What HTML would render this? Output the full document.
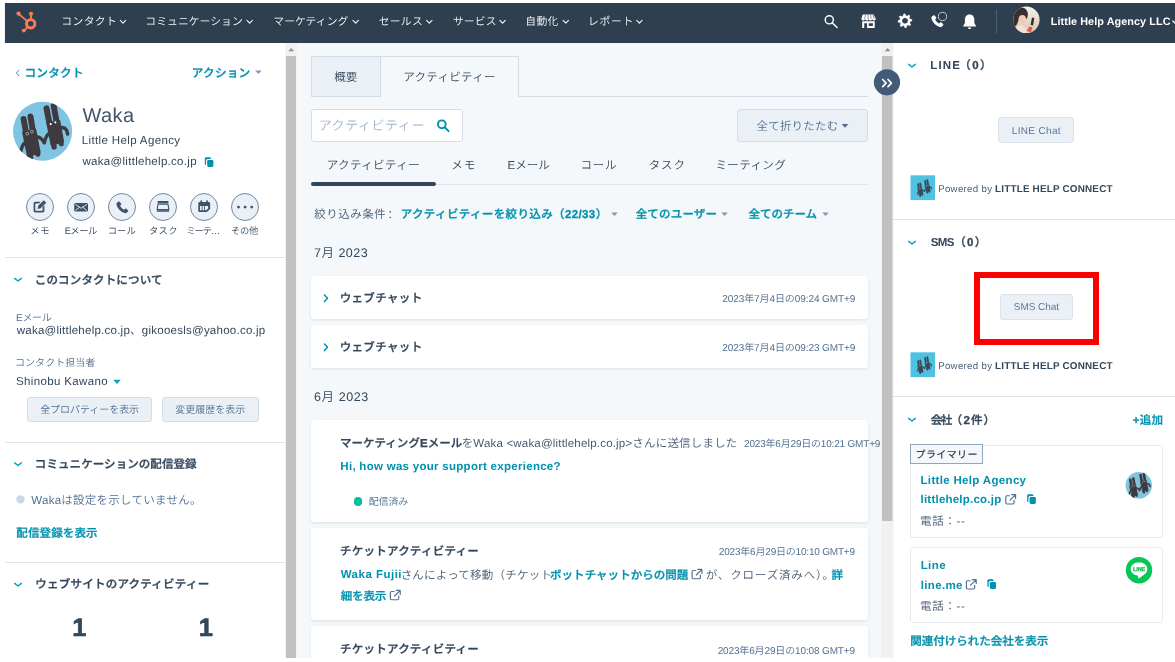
<!DOCTYPE html>
<html lang="ja">
<head>
<meta charset="utf-8">
<title>Waka | HubSpot</title>
<style>
*{box-sizing:border-box}
html,body{margin:0;padding:0}
body{width:1175px;height:662px;background:#fff;overflow:hidden;position:relative;font-family:"Liberation Sans","Noto Sans CJK JP",sans-serif;color:#33475b;font-weight:350;-webkit-font-smoothing:antialiased;font-kerning:normal;text-rendering:geometricPrecision}
.t{position:absolute;white-space:pre;margin:0;padding:0;z-index:4}
.b{position:absolute}
svg{position:absolute;overflow:visible}
.t b{font-weight:700}
nav,aside,main{position:absolute;left:0;top:0;width:1175px;height:662px;will-change:transform;pointer-events:none}
.t{z-index:auto}
</style>
</head>
<body>
<div class="b" style="left:5px;top:3px;width:1170px;height:40px;background:#2e3f50;box-shadow:0 1px 1px rgba(45,62,80,.35)"></div>
<div class="b" style="left:5px;top:43px;width:280px;height:615px;background:#fff"></div>
<div class="b" style="left:297px;top:43px;width:584px;height:615px;background:#f5f8fa"></div>
<div class="b" style="left:893px;top:43px;width:282px;height:615px;background:#fff"></div>
<div class="b" style="left:285px;top:43px;width:12px;height:615px;background:#f1f1f1"></div>
<div class="b" style="left:297px;top:43px;width:1px;height:615px;background:#f3f5f7"></div>
<div class="b" style="left:286px;top:56px;width:10px;height:602px;background:#c1c1c1"></div>
<div class="b" style="left:881px;top:43px;width:12px;height:615px;background:#f1f1f1"></div>
<div class="b" style="left:893px;top:43px;width:1px;height:615px;background:#f8f8f8"></div>
<div class="b" style="left:882px;top:56px;width:10px;height:465px;background:#c1c1c1"></div>
<div class="b" style="left:892px;top:56px;width:1px;height:465px;background:#dcdcdc"></div>
<div class="b" style="left:5px;top:256.5px;width:280px;height:1px;background:#dfe3eb"></div>
<div class="b" style="left:5px;top:441.7px;width:280px;height:1px;background:#dfe3eb"></div>
<div class="b" style="left:5px;top:562.2px;width:280px;height:1px;background:#dfe3eb"></div>
<div class="b" style="left:27px;top:396.5px;width:125px;height:25.5px;background:#eaf0f6;border:1px solid #d4dde7;border-radius:3px"></div>
<div class="b" style="left:162px;top:396.5px;width:97px;height:25.5px;background:#eaf0f6;border:1px solid #d4dde7;border-radius:3px"></div>
<div class="b" style="left:26px;top:193px;width:28px;height:28px;background:#eaf0f6;border:1px solid #6f88a4;border-radius:50%"></div>
<div class="b" style="left:67px;top:193px;width:28px;height:28px;background:#eaf0f6;border:1px solid #6f88a4;border-radius:50%"></div>
<div class="b" style="left:108px;top:193px;width:28px;height:28px;background:#eaf0f6;border:1px solid #6f88a4;border-radius:50%"></div>
<div class="b" style="left:149px;top:193px;width:28px;height:28px;background:#eaf0f6;border:1px solid #6f88a4;border-radius:50%"></div>
<div class="b" style="left:190px;top:193px;width:28px;height:28px;background:#eaf0f6;border:1px solid #6f88a4;border-radius:50%"></div>
<div class="b" style="left:231px;top:193px;width:28px;height:28px;background:#eaf0f6;border:1px solid #6f88a4;border-radius:50%"></div>
<div class="b" style="left:311px;top:56px;width:70px;height:40.5px;background:#eaf0f6;border:1px solid #d3deea"></div>
<div class="b" style="left:380px;top:56px;width:138.5px;height:41px;background:#f5f8fa;border:1px solid #d4dde7;border-bottom:none"></div>
<div class="b" style="left:518px;top:95.5px;width:350px;height:1px;background:#d4dde7"></div>
<div class="b" style="left:311px;top:109px;width:151.5px;height:33px;background:#fff;border:1px solid #d4dde7;border-radius:3px"></div>
<div class="b" style="left:737px;top:109px;width:131px;height:33px;background:#eaf0f6;border:1px solid #d4dde7;border-radius:3px"></div>
<div class="b" style="left:311px;top:184px;width:557px;height:1px;background:#dfe3eb"></div>
<div class="b" style="left:311px;top:182px;width:124.5px;height:4.3px;background:#33475b;border-radius:2px"></div>
<div class="b" style="left:311px;top:276px;width:557px;height:43px;background:#fff;border-radius:3px;box-shadow:0 1px 3px rgba(45,62,80,.12)"></div>
<div class="b" style="left:311px;top:325px;width:557px;height:43px;background:#fff;border-radius:3px;box-shadow:0 1px 3px rgba(45,62,80,.12)"></div>
<div class="b" style="left:311px;top:420px;width:557px;height:101.5px;background:#fff;border-radius:3px;box-shadow:0 1px 3px rgba(45,62,80,.12)"></div>
<div class="b" style="left:311px;top:528px;width:557px;height:92px;background:#fff;border-radius:3px;box-shadow:0 1px 3px rgba(45,62,80,.12)"></div>
<div class="b" style="left:311px;top:626px;width:557px;height:40px;background:#fff;border-radius:3px;box-shadow:0 1px 3px rgba(45,62,80,.12)"></div>
<div class="b" style="left:353.8px;top:497px;width:8.6px;height:8.6px;background:#00bda5;border-radius:50%"></div>
<div class="b" style="left:893px;top:219px;width:282px;height:1px;background:#dfe3eb"></div>
<div class="b" style="left:893px;top:396px;width:282px;height:1px;background:#dfe3eb"></div>
<div class="b" style="left:998px;top:117px;width:76px;height:26px;background:#eaf0f6;border:1px solid #dae2eb;border-radius:3px"></div>
<div class="b" style="left:1000px;top:294px;width:73px;height:25.6px;background:#eaf0f6;border:1px solid #dae2eb;border-radius:3px"></div>
<div class="b" style="left:974px;top:272px;width:125px;height:73px;border:6px solid #ff0000"></div>
<div class="b" style="left:910px;top:445px;width:253px;height:93px;background:#fff;border:1px solid #e6eaf0;border-radius:3px"></div>
<div class="b" style="left:910px;top:547px;width:253px;height:75.5px;background:#fff;border:1px solid #e6eaf0;border-radius:3px"></div>
<div class="b" style="left:910px;top:444px;width:73px;height:20px;background:#f5f8fa;border:1px solid #8fa6bf"></div>
<div class="b" style="left:0px;top:658px;width:1175px;height:4px;background:#fff;z-index:5"></div>
<svg width="1175" height="662" viewBox="0 0 1175 662" style="left:0;top:0;z-index:3;pointer-events:none">
<g fill="none" stroke="#ff7a59" stroke-linecap="round"><circle cx="30.7" cy="23.8" r="4.2" stroke-width="2.9"/><path d="M31 18.5V15.2" stroke-width="1.9"/><path d="M26.9 20.8L19.5 14.6" stroke-width="1.7"/><path d="M27.6 27.2L24.6 30" stroke-width="1.8"/></g>
<g fill="#ff7a59"><circle cx="31" cy="13.8" r="2.1"/><circle cx="18.5" cy="13.6" r="2.1"/><circle cx="23.8" cy="30.6" r="1.9"/></g>
<path d="M120.3 20.4l2.700 2.700 2.700-2.700" fill="none" stroke="#f2f5f8" stroke-width="1.150" stroke-linecap="round" stroke-linejoin="round"/>
<path d="M247.0 20.4l2.700 2.700 2.700-2.700" fill="none" stroke="#f2f5f8" stroke-width="1.150" stroke-linecap="round" stroke-linejoin="round"/>
<path d="M353.0 20.4l2.700 2.700 2.700-2.700" fill="none" stroke="#f2f5f8" stroke-width="1.150" stroke-linecap="round" stroke-linejoin="round"/>
<path d="M426.6 20.4l2.700 2.700 2.700-2.700" fill="none" stroke="#f2f5f8" stroke-width="1.150" stroke-linecap="round" stroke-linejoin="round"/>
<path d="M499.9 20.4l2.700 2.700 2.700-2.700" fill="none" stroke="#f2f5f8" stroke-width="1.150" stroke-linecap="round" stroke-linejoin="round"/>
<path d="M563.1 20.4l2.700 2.700 2.700-2.700" fill="none" stroke="#f2f5f8" stroke-width="1.150" stroke-linecap="round" stroke-linejoin="round"/>
<path d="M636.7 20.4l2.700 2.700 2.700-2.700" fill="none" stroke="#f2f5f8" stroke-width="1.150" stroke-linecap="round" stroke-linejoin="round"/>
<g fill="none" stroke="#fff" stroke-width="1.450" stroke-linecap="round"><circle cx="829.300" cy="19.800" r="4.100"/><path d="M832.400 23l4.700 4.500"/></g>
<g fill="#fff"><path d="M862.700 14.400h10.900l2.200 4.300c0 1-.8 1.700-1.800 1.700s-1.800-.7-1.800-1.500c0 .8-.8 1.500-1.800 1.500s-1.800-.7-1.800-1.500c0 .8-.8 1.500-1.800 1.500s-1.800-.7-1.800-1.500c0 .8-.8 1.500-1.800 1.500s-1.800-.7-1.800-1.700z"/><path d="M862.200 21.300h12.500v6.800h-12.500zM864.200 23.300v4.800h2.900v-4.800zM868.800 23.300v2.600h4.100v-2.600z" fill-rule="evenodd"/></g>
<path d="M865.600 14.600l-1 4.300M868.100 14.600v4.300M870.600 14.600l.5 4.300M873 14.600l1.100 4.300" stroke="#2e3f50" stroke-width=".7" fill="none" opacity=".75"/>
<path d="M911.96 19.41 L912.10 20.80 L910.10 21.81 L909.80 22.79 L910.90 24.74 L910.02 25.82 L907.89 25.12 L906.99 25.60 L906.39 27.76 L905.00 27.90 L903.99 25.90 L903.01 25.60 L901.06 26.70 L899.98 25.82 L900.68 23.69 L900.20 22.79 L898.04 22.19 L897.90 20.80 L899.90 19.79 L900.20 18.81 L899.10 16.86 L899.98 15.78 L902.11 16.48 L903.01 16.00 L903.61 13.84 L905.00 13.70 L906.01 15.70 L906.99 16.00 L908.94 14.90 L910.02 15.78 L909.32 17.91 L909.80 18.81 Z M905.00 17.80 a3 3 0 1 0 0.01 0Z" fill="#fff" fill-rule="evenodd" stroke="#fff" stroke-width=".25" stroke-linejoin="round"/>
<g transform="translate(930.6,14.600) scale(0.75)"><path d="M3.6 1.2c.5-.5 1.300-.5 1.800 0l2 2.200c.4.5.4 1.200 0 1.700l-1 1.200c-.3.300-.3.700-.1 1 1 1.800 2.500 3.300 4.300 4.300.3.200.7.100 1-.1l1.200-1c.5-.4 1.200-.4 1.700 0l2.200 2c.5.500.5 1.300 0 1.800l-1.300 1.400c-.8.800-2 1.100-3.100.8-5.300-1.700-9.400-5.800-11.100-11.100-.3-1.100 0-2.300.8-3.100z" fill="#fff"/></g>
<circle cx="942.500" cy="16.500" r="4.100" fill="#2e3f50" stroke="#cfd8e2" stroke-width="0.9"/>
<path d="M969.6 14.600c-3 0-4.700 2.200-4.700 5v3.400l-1.600 2.700c-.2.400 0 .8.500.8h11.600c.5 0 .7-.4.500-.8l-1.600-2.700v-3.400c0-2.800-1.700-5-4.700-5zM968 27.500h3.200c0 .9-.7 1.600-1.600 1.600s-1.600-.7-1.600-1.600z" fill="#fff"/>
<path d="M996.5 9.500v24" stroke="#45607c" stroke-width="1"/>
<defs><clipPath id="av"><circle cx="1026.4" cy="19.800" r="13.200"/></clipPath><linearGradient id="avg" x1="0" y1="0" x2="0" y2="1"><stop offset="0" stop-color="#f4f1ee"/><stop offset="0.55" stop-color="#e9d9c8"/><stop offset="1" stop-color="#e2c4ab"/></linearGradient></defs>
<g clip-path="url(#av)"><rect x="1013" y="6" width="27" height="27" fill="url(#avg)"/><path d="M1013 20c0-6 3-11.500 8.500-12.500 4 0 6 3 6.500 6.500l-1 5-4-3-3.500 1-1.500 5-2 4-3 .5z" fill="#3b2f2e"/><ellipse cx="1022.300" cy="19.600" rx="3.700" ry="4.500" fill="#f0cbb8"/><path d="M1015 33.500l1.500-6.500 4.500-2 4.500 2.500 2 6z" fill="#f2e3da"/><path d="M1032 17.500l2.300.6-1.200 7.300-2.500-.7z" fill="#2f2f38"/><path d="M1026.500 31l3-4.500 3 .8-1.500 5z" fill="#d6604f"/></g>
<path d="M1172.800 21l2.400 2.300" fill="none" stroke="#fff" stroke-width="1.200" stroke-linecap="round"/>
<path d="M18.800 70.200l-2.400 2.800 2.400 2.800" fill="none" stroke="#2a9db6" stroke-width="1" stroke-linecap="round" stroke-linejoin="round"/>
<path d="M255.20 70.50h6.40l-3.20 3.60z" fill="#7c98b6"/>
<g transform="translate(204.80,157.30)"><path d="M0 1.400c0-.8.600-1.400 1.400-1.400h3.400c.8 0 1.400.6 1.400 1.400v.3h-3.200c-1 0-1.700.8-1.700 1.700v4.100h-.9c-.2 0-.4-.2-.4-.4z" fill="#0091ae"/><rect x="2.400" y="2.600" width="6.200" height="7" rx="1.300" fill="#0091ae"/></g>
<path d="M14.70 278.35l3.300 2.700 3.300-2.700" fill="none" stroke="#00a4bd" stroke-width="1.400" stroke-linecap="round" stroke-linejoin="round"/>
<path d="M14.70 462.85l3.300 2.700 3.300-2.700" fill="none" stroke="#00a4bd" stroke-width="1.400" stroke-linecap="round" stroke-linejoin="round"/>
<path d="M14.70 583.35l3.300 2.700 3.300-2.700" fill="none" stroke="#00a4bd" stroke-width="1.400" stroke-linecap="round" stroke-linejoin="round"/>
<path d="M113.30 379.70h7.40l-3.70 4.20z" fill="#00a4bd"/>
<circle cx="20.500" cy="499.400" r="4.200" fill="#cbd6e2"/>
<g fill="#3c546d"><path d="M35.300 201.800h5.500l-1.800 1.800h-3.200c-.3 0-.5.200-.5.500v6.200c0 .3.200.5.500.5h6.300c.3 0 .5-.2.500-.5v-3.300l1.800-1.800v5.600c0 1-.8 1.700-1.700 1.700h-7.400c-1 0-1.700-.8-1.700-1.700v-7.300c0-1 .8-1.700 1.700-1.700z"/><path d="M43.800 200.200l2.500 2.500-5.600 5.600-3.200.7.700-3.200z"/></g>
<g><rect x="74.200" y="203" width="13.800" height="8.600" rx="1.400" fill="#3c546d"/><path d="M75.600 204.500l5.500 3.800 5.500-3.800M75.800 210.200l3.600-3M86.400 210.200l-3.600-3" fill="none" stroke="#eaf0f6" stroke-width="0.9" stroke-linecap="round" stroke-linejoin="round"/></g>
<g transform="translate(115.600,200.900) scale(0.74)"><path d="M3.6 1.2c.5-.5 1.300-.5 1.800 0l2 2.200c.4.5.4 1.200 0 1.700l-1 1.200c-.3.300-.3.700-.1 1 1 1.800 2.500 3.300 4.300 4.300.3.200.7.100 1-.1l1.200-1c.5-.4 1.200-.4 1.700 0l2.200 2c.5.500.5 1.300 0 1.800l-1.300 1.400c-.8.800-2 1.100-3.100.8-5.300-1.700-9.400-5.800-11.100-11.100-.3-1.100 0-2.300.8-3.100z" fill="#3c546d"/></g>
<g fill="#3c546d"><rect x="157.600" y="200.900" width="10.800" height="2.600" rx=".6"/><path d="M158 204.200h10l.9 5.400h-11.800z" fill="none" stroke="#3c546d" stroke-width="1.100" stroke-linejoin="round"/><rect x="156.800" y="210.300" width="12.400" height="1.500" rx=".5"/></g>
<g fill="#3c546d"><rect x="200.400" y="200.300" width="1.700" height="3" rx=".6"/><rect x="206.200" y="200.300" width="1.700" height="3" rx=".6"/><path d="M199.600 201.900h9.200c.7 0 1.300.6 1.300 1.300v5.700l-3.200 3.200h-7.300c-.7 0-1.300-.6-1.300-1.300v-7.600c0-.7.600-1.300 1.300-1.300zM200 206v4.300h1.700v-4.300zM202.500 206v4.300h1.700v-4.300zM205 206v4.300h1.200l1.900-1.900v-2.400z" fill-rule="evenodd"/></g>
<circle cx="238.5" cy="207.100" r="1.450" fill="#3c546d"/>
<circle cx="245.1" cy="207.100" r="1.450" fill="#3c546d"/>
<circle cx="251.7" cy="207.100" r="1.450" fill="#3c546d"/>
<g transform="translate(13.10,101.70) scale(1.0000)"><clipPath id="bc42"><circle cx="29.500" cy="29.500" r="29.500"/></clipPath><circle cx="29.500" cy="29.500" r="29.500" fill="#7fc4e0"/><g clip-path="url(#bc42)" stroke="#3e3a40" fill="none" stroke-linecap="round" stroke-linejoin="round"><path d="M10.500 17.300L13.200 32" stroke-width="6"/><path d="M17.400 14.800L19.900 30" stroke-width="6"/><path d="M10 30.500L22.200 28.200L26.600 51L14.800 54Z" fill="#3e3a40" stroke-width="2"/><path d="M17 54L17.400 56" stroke-width="5.600"/><path d="M24.300 50.800L24.700 52.600" stroke-width="5"/><path d="M12.500 40.500C10 42.500 8.500 45.500 7.800 49.500" stroke-width="3.400"/><path d="M23.500 35C27 35.500 29.500 37.500 31 41" stroke-width="3.400"/><path d="M33.400 6.700L36.400 22" stroke-width="6"/><path d="M40.600 4L43.300 19" stroke-width="6"/><path d="M34.300 21.500L46.200 19.200L50 40L38.400 42.800Z" fill="#3e3a40" stroke-width="2"/><path d="M40.600 43L41 45.200" stroke-width="5.400"/><path d="M47.800 40.500L48.100 42.200" stroke-width="5"/><path d="M36.500 31C33.500 33.500 32 37 31.300 41" stroke-width="3.400"/><path d="M47.500 26.200C51.500 25.200 54 27.500 54.500 32.300" stroke-width="3.600"/></g><g fill="none" stroke="#c9c5c9" stroke-width=".7"><circle cx="14.200" cy="32" r="1.400"/><circle cx="18.800" cy="30" r="1.400"/></g><g fill="#fff"><circle cx="37.600" cy="22.400" r="1.100"/><circle cx="42.200" cy="20.600" r="1.100"/></g></g>
<g fill="none" stroke="#0091ae" stroke-width="1.900" stroke-linecap="round"><circle cx="441.800" cy="124.300" r="3.900"/><path d="M444.900 127.500l3.700 3.700"/></g>
<path d="M841.60 123.95h6.80l-3.40 3.70z" fill="#516f90"/>
<path d="M611.30 212.50h6.40l-3.20 3.60z" fill="#7c98b6"/>
<path d="M721.30 212.50h6.40l-3.20 3.60z" fill="#7c98b6"/>
<path d="M822.30 212.50h6.40l-3.20 3.60z" fill="#7c98b6"/>
<path d="M324.50 295.00l3 3.300-3 3.300" fill="none" stroke="#0091ae" stroke-width="1.500" stroke-linecap="round" stroke-linejoin="round"/>
<path d="M324.50 344.00l3 3.300-3 3.300" fill="none" stroke="#0091ae" stroke-width="1.500" stroke-linecap="round" stroke-linejoin="round"/>
<g transform="translate(691.50,568.80)" fill="none" stroke="#516f90" stroke-width="1.150" stroke-linecap="round" stroke-linejoin="round"><path d="M4.300 1.700H1.800C1.100 1.700.6 2.200.6 2.900v5.900c0 .7.500 1.200 1.200 1.200h5.900c.7 0 1.200-.5 1.200-1.200V6.300"/><path d="M6.400.6h4v4M10.200.8L4.800 6.200"/></g>
<g transform="translate(389.80,589.80)" fill="none" stroke="#516f90" stroke-width="1.150" stroke-linecap="round" stroke-linejoin="round"><path d="M4.300 1.700H1.800C1.100 1.700.6 2.200.6 2.900v5.900c0 .7.500 1.200 1.200 1.200h5.900c.7 0 1.200-.5 1.200-1.200V6.300"/><path d="M6.400.6h4v4M10.200.8L4.800 6.200"/></g>
<circle cx="887" cy="82.300" r="13.100" fill="#425b76"/>
<path d="M882.700 79.500l3.400 3.600-3.400 3.600M888 79.500l3.400 3.600-3.400 3.600" fill="none" stroke="#fff" stroke-width="1.700" stroke-linecap="round" stroke-linejoin="round"/>
<path d="M288.3 51.300h5.800l-2.900-3.300z" fill="#8f8f8f"/>
<path d="M884.7 51.300h5.800l-2.900-3.300z" fill="#8f8f8f"/>
<path d="M908.70 64.35l3.300 2.700 3.300-2.700" fill="none" stroke="#00a4bd" stroke-width="1.400" stroke-linecap="round" stroke-linejoin="round"/>
<path d="M908.70 241.35l3.300 2.700 3.300-2.700" fill="none" stroke="#00a4bd" stroke-width="1.400" stroke-linecap="round" stroke-linejoin="round"/>
<path d="M908.70 418.35l3.300 2.700 3.300-2.700" fill="none" stroke="#00a4bd" stroke-width="1.400" stroke-linecap="round" stroke-linejoin="round"/>
<rect x="910.50" y="175.30" width="24.500" height="24.800" fill="#4fc1e1"/>
<g transform="translate(914.90,179.00) scale(0.305)" stroke="#3a4757" fill="none" stroke-linecap="round" stroke-linejoin="round"><path d="M10.500 17.300L13.200 32" stroke-width="6"/><path d="M17.400 14.800L19.900 30" stroke-width="6"/><path d="M10 30.500L22.200 28.200L26.600 51L14.800 54Z" fill="#3a4757" stroke-width="2"/><path d="M17 54L17.400 56" stroke-width="5.600"/><path d="M24.300 50.800L24.700 52.600" stroke-width="5"/><path d="M12.500 40.500C10 42.500 8.500 45.500 7.800 49.500" stroke-width="3.400"/><path d="M23.500 35C27 35.500 29.500 37.500 31 41" stroke-width="3.400"/><path d="M33.400 6.700L36.400 22" stroke-width="6"/><path d="M40.600 4L43.300 19" stroke-width="6"/><path d="M34.300 21.500L46.200 19.200L50 40L38.400 42.800Z" fill="#3a4757" stroke-width="2"/><path d="M40.600 43L41 45.200" stroke-width="5.400"/><path d="M47.800 40.500L48.100 42.200" stroke-width="5"/><path d="M36.500 31C33.500 33.500 32 37 31.300 41" stroke-width="3.400"/><path d="M47.500 26.200C51.500 25.200 54 27.500 54.500 32.300" stroke-width="3.600"/><g stroke="#8fa0b0" stroke-width="1.200"><circle cx="14.200" cy="32" r="1.200"/><circle cx="18.800" cy="30.300" r="1.200"/><circle cx="37.800" cy="22.400" r="1.200"/><circle cx="42.300" cy="20.600" r="1.200"/></g></g>
<rect x="910.50" y="352.30" width="24.500" height="24.800" fill="#4fc1e1"/>
<g transform="translate(914.90,356.00) scale(0.305)" stroke="#3a4757" fill="none" stroke-linecap="round" stroke-linejoin="round"><path d="M10.500 17.300L13.200 32" stroke-width="6"/><path d="M17.400 14.800L19.900 30" stroke-width="6"/><path d="M10 30.500L22.200 28.200L26.600 51L14.800 54Z" fill="#3a4757" stroke-width="2"/><path d="M17 54L17.400 56" stroke-width="5.600"/><path d="M24.300 50.800L24.700 52.600" stroke-width="5"/><path d="M12.500 40.500C10 42.500 8.500 45.500 7.800 49.500" stroke-width="3.400"/><path d="M23.500 35C27 35.500 29.500 37.500 31 41" stroke-width="3.400"/><path d="M33.400 6.700L36.400 22" stroke-width="6"/><path d="M40.600 4L43.300 19" stroke-width="6"/><path d="M34.300 21.500L46.200 19.200L50 40L38.400 42.800Z" fill="#3a4757" stroke-width="2"/><path d="M40.600 43L41 45.200" stroke-width="5.400"/><path d="M47.800 40.500L48.100 42.200" stroke-width="5"/><path d="M36.500 31C33.500 33.500 32 37 31.300 41" stroke-width="3.400"/><path d="M47.500 26.200C51.500 25.200 54 27.500 54.500 32.300" stroke-width="3.600"/><g stroke="#8fa0b0" stroke-width="1.200"><circle cx="14.200" cy="32" r="1.200"/><circle cx="18.800" cy="30.300" r="1.200"/><circle cx="37.800" cy="22.400" r="1.200"/><circle cx="42.300" cy="20.600" r="1.200"/></g></g>
<g transform="translate(1005.20,494.00)" fill="none" stroke="#516f90" stroke-width="1.150" stroke-linecap="round" stroke-linejoin="round"><path d="M4.300 1.700H1.800C1.100 1.700.6 2.200.6 2.900v5.900c0 .7.500 1.200 1.200 1.200h5.900c.7 0 1.200-.5 1.200-1.200V6.300"/><path d="M6.400.6h4v4M10.200.8L4.800 6.200"/></g>
<g transform="translate(1027.20,494.30)"><path d="M0 1.400c0-.8.600-1.400 1.400-1.400h3.400c.8 0 1.400.6 1.400 1.400v.3h-3.200c-1 0-1.700.8-1.700 1.700v4.100h-.9c-.2 0-.4-.2-.4-.4z" fill="#0091ae"/><rect x="2.400" y="2.600" width="6.200" height="7" rx="1.300" fill="#0091ae"/></g>
<g transform="translate(965.80,579.00)" fill="none" stroke="#516f90" stroke-width="1.150" stroke-linecap="round" stroke-linejoin="round"><path d="M4.300 1.700H1.800C1.100 1.700.6 2.200.6 2.900v5.900c0 .7.500 1.200 1.200 1.200h5.900c.7 0 1.200-.5 1.200-1.200V6.300"/><path d="M6.400.6h4v4M10.200.8L4.800 6.200"/></g>
<g transform="translate(987.40,579.30)"><path d="M0 1.400c0-.8.600-1.400 1.400-1.400h3.400c.8 0 1.400.6 1.400 1.400v.3h-3.200c-1 0-1.700.8-1.700 1.700v4.100h-.9c-.2 0-.4-.2-.4-.4z" fill="#0091ae"/><rect x="2.400" y="2.600" width="6.200" height="7" rx="1.300" fill="#0091ae"/></g>
<g transform="translate(1125.55,472.05) scale(0.4492)"><clipPath id="bc1138"><circle cx="29.500" cy="29.500" r="29.500"/></clipPath><circle cx="29.500" cy="29.500" r="29.500" fill="#7fc4e0"/><g clip-path="url(#bc1138)" stroke="#3e3a40" fill="none" stroke-linecap="round" stroke-linejoin="round"><path d="M10.500 17.300L13.200 32" stroke-width="6"/><path d="M17.400 14.800L19.900 30" stroke-width="6"/><path d="M10 30.500L22.200 28.200L26.600 51L14.800 54Z" fill="#3e3a40" stroke-width="2"/><path d="M17 54L17.400 56" stroke-width="5.600"/><path d="M24.300 50.800L24.700 52.600" stroke-width="5"/><path d="M12.500 40.500C10 42.500 8.500 45.500 7.800 49.500" stroke-width="3.400"/><path d="M23.500 35C27 35.500 29.500 37.500 31 41" stroke-width="3.400"/><path d="M33.400 6.700L36.400 22" stroke-width="6"/><path d="M40.600 4L43.300 19" stroke-width="6"/><path d="M34.300 21.500L46.200 19.200L50 40L38.400 42.800Z" fill="#3e3a40" stroke-width="2"/><path d="M40.600 43L41 45.200" stroke-width="5.400"/><path d="M47.800 40.500L48.100 42.200" stroke-width="5"/><path d="M36.500 31C33.500 33.500 32 37 31.300 41" stroke-width="3.400"/><path d="M47.500 26.200C51.500 25.200 54 27.500 54.500 32.300" stroke-width="3.600"/></g><g fill="none" stroke="#c9c5c9" stroke-width=".7"><circle cx="14.200" cy="32" r="1.400"/><circle cx="18.800" cy="30" r="1.400"/></g><g fill="#fff"><circle cx="37.600" cy="22.400" r="1.100"/><circle cx="42.200" cy="20.600" r="1.100"/></g></g>
<g><circle cx="1139" cy="570.200" r="13.200" fill="#06c755"/><path d="M1139 562.300c-4.600 0-8.300 3-8.300 6.700 0 3.300 2.900 6.100 6.900 6.600.6.100.7.500.6 1l-.1 1.200c0 .5.300.7.800.4 1.900-1.100 5.700-3.400 7.200-5.500.8-1.100 1.200-2.400 1.200-3.700 0-3.700-3.700-6.700-8.300-6.700z" fill="#fff"/><text x="1139.100" y="571" font-family="Liberation Sans, sans-serif" font-weight="700" font-size="5.600" text-anchor="middle" fill="#06c755" stroke="#06c755" stroke-width=".25" letter-spacing="-.15">LINE</text></g>
</svg>
<div id="texts">
<nav id="global-nav">
<span class="t" style="left:61.33px;top:12px;font-size:10.8px;line-height:20px;color:#f2f5f8;letter-spacing:0.383px;">コンタクト</span>
<span class="t" style="left:145.33px;top:12px;font-size:10.8px;line-height:20px;color:#f2f5f8;letter-spacing:0.058px;">コミュニケーション</span>
<span class="t" style="left:273.30px;top:12px;font-size:10.8px;line-height:20px;color:#f2f5f8;letter-spacing:0.050px;">マーケティング</span>
<span class="t" style="left:378.83px;top:12px;font-size:10.8px;line-height:20px;color:#f2f5f8;letter-spacing:0.222px;">セールス</span>
<span class="t" style="left:452.93px;top:12px;font-size:10.8px;line-height:20px;color:#f2f5f8;letter-spacing:0.156px;">サービス</span>
<span class="t" style="left:525.33px;top:12px;font-size:10.8px;line-height:20px;color:#f2f5f8;letter-spacing:0.333px;">自動化</span>
<span class="t" style="left:587.97px;top:12px;font-size:10.8px;line-height:20px;color:#f2f5f8;letter-spacing:0.722px;">レポート</span>
<span class="t" style="left:1050.83px;top:12px;font-size:10.8px;line-height:20px;color:#ffffff;font-weight:700;letter-spacing:0.087px;">Little Help Agency LLC</span>
</nav>
<aside id="contact-sidebar">
<span class="t" style="left:24.53px;top:64px;font-size:11.6px;line-height:20px;color:#0091ae;font-weight:500;letter-spacing:0.250px;-webkit-text-stroke:0.3px;">コンタクト</span>
<span class="t" style="left:191.87px;top:64px;font-size:11.6px;line-height:20px;color:#0091ae;font-weight:500;letter-spacing:0.217px;-webkit-text-stroke:0.3px;">アクション</span>
<span class="t" style="left:82.50px;top:106px;font-size:20px;line-height:20px;color:#43566a;letter-spacing:0.389px;">Waka</span>
<span class="t" style="left:81.70px;top:131px;font-size:11.5px;line-height:20px;color:#33475b;letter-spacing:0.371px;">Little Help Agency</span>
<span class="t" style="left:82.50px;top:152px;font-size:11.5px;line-height:20px;color:#33475b;letter-spacing:0.292px;">waka@littlehelp.co.jp</span>
<span class="t" style="left:30.27px;top:221px;font-size:9.3px;line-height:20px;color:#33475b;letter-spacing:0.567px;">メモ</span>
<span class="t" style="left:64.63px;top:221px;font-size:9.3px;line-height:20px;color:#33475b;letter-spacing:-0.467px;">Eメール</span>
<span class="t" style="left:107.67px;top:221px;font-size:9.3px;line-height:20px;color:#33475b;letter-spacing:0.100px;">コール</span>
<span class="t" style="left:149.00px;top:221px;font-size:9.3px;line-height:20px;color:#33475b;letter-spacing:0.267px;">タスク</span>
<span class="t" style="left:186.13px;top:221px;font-size:9.3px;line-height:20px;color:#33475b;letter-spacing:-0.978px;">ミーテ…</span>
<span class="t" style="left:231.00px;top:221px;font-size:9.3px;line-height:20px;color:#33475b;letter-spacing:-0.283px;">その他</span>
<span class="t" style="left:34.83px;top:271px;font-size:11.5px;line-height:20px;color:#33475b;font-weight:500;letter-spacing:0.147px;-webkit-text-stroke:0.3px;">このコンタクトについて</span>
<span class="t" style="left:16.03px;top:309px;font-size:10px;line-height:20px;color:#516f90;letter-spacing:-0.289px;">Eメール</span>
<span class="t" style="left:16.70px;top:321px;font-size:11.5px;line-height:20px;color:#33475b;letter-spacing:0.246px;">waka@littlehelp.co.jp、gikooesls@yahoo.co.jp</span>
<span class="t" style="left:15.03px;top:354px;font-size:10px;line-height:20px;color:#516f90;letter-spacing:0.043px;">コンタクト担当者</span>
<span class="t" style="left:16.03px;top:372px;font-size:11.5px;line-height:20px;color:#33475b;letter-spacing:0.354px;">Shinobu Kawano</span>
<span class="t" style="left:40.17px;top:401px;font-size:10px;line-height:20px;color:#516f90;letter-spacing:-0.052px;">全プロパティーを表示</span>
<span class="t" style="left:175.33px;top:401px;font-size:10px;line-height:20px;color:#516f90;letter-spacing:0.006px;">変更履歴を表示</span>
<span class="t" style="left:34.83px;top:455px;font-size:11.5px;line-height:20px;color:#33475b;font-weight:500;letter-spacing:0.077px;-webkit-text-stroke:0.3px;">コミュニケーションの配信登録</span>
<span class="t" style="left:31.30px;top:491px;font-size:11.5px;line-height:20px;color:#516f90;letter-spacing:0.256px;">Wakaは設定を示していません。</span>
<span class="t" style="left:16.37px;top:524px;font-size:11.5px;line-height:20px;color:#0091ae;font-weight:500;letter-spacing:0.106px;-webkit-text-stroke:0.3px;">配信登録を表示</span>
<span class="t" style="left:35.17px;top:575px;font-size:11.5px;line-height:20px;color:#33475b;font-weight:500;letter-spacing:0.248px;-webkit-text-stroke:0.3px;">ウェブサイトのアクティビティー</span>
<span class="t" style="left:72.30px;top:613px;font-size:25.5px;line-height:30px;color:#33475b;font-weight:700;-webkit-text-stroke:0.6px;">1</span>
<span class="t" style="left:198.65px;top:613px;font-size:25.5px;line-height:30px;color:#33475b;font-weight:700;-webkit-text-stroke:0.6px;">1</span>
</aside>
<main id="timeline">
<span class="t" style="left:334.17px;top:68px;font-size:11.5px;line-height:20px;color:#33475b;letter-spacing:0.167px;">概要</span>
<span class="t" style="left:403.27px;top:68px;font-size:11.5px;line-height:20px;color:#33475b;letter-spacing:0.319px;">アクティビティー</span>
<span class="t" style="left:318.63px;top:116px;font-size:13px;line-height:20px;color:#a3b6ca;letter-spacing:0.576px;">アクティビティー</span>
<span class="t" style="left:756.53px;top:117px;font-size:11.5px;line-height:20px;color:#516f90;letter-spacing:0.200px;">全て折りたたむ</span>
<span class="t" style="left:326.67px;top:156px;font-size:11.5px;line-height:20px;color:#33475b;letter-spacing:0.433px;">アクティビティー</span>
<span class="t" style="left:451.27px;top:156px;font-size:11.5px;line-height:20px;color:#33475b;letter-spacing:1.133px;">メモ</span>
<span class="t" style="left:507.60px;top:156px;font-size:11.5px;line-height:20px;color:#33475b;letter-spacing:-0.022px;">Eメール</span>
<span class="t" style="left:580.60px;top:156px;font-size:11.5px;line-height:20px;color:#33475b;letter-spacing:0.700px;">コール</span>
<span class="t" style="left:648.67px;top:156px;font-size:11.5px;line-height:20px;color:#33475b;letter-spacing:0.917px;">タスク</span>
<span class="t" style="left:715.50px;top:156px;font-size:11.5px;line-height:20px;color:#33475b;letter-spacing:0.367px;">ミーティング</span>
<span class="t" style="left:314.37px;top:205px;font-size:11.5px;line-height:20px;color:#425a73;letter-spacing:0.453px;">絞り込み条件</span>
<span class="t" style="left:384.42px;top:206px;font-size:11.5px;line-height:20px;color:#425a73;">：</span>
<span class="t" style="left:400.67px;top:205px;font-size:11.5px;line-height:20px;color:#0091ae;font-weight:500;letter-spacing:0.377px;-webkit-text-stroke:0.3px;">アクティビティーを絞り込み（<b>22/33</b>）</span>
<span class="t" style="left:635.67px;top:205px;font-size:11.5px;line-height:20px;color:#0091ae;font-weight:500;letter-spacing:0.183px;-webkit-text-stroke:0.3px;">全てのユーザー</span>
<span class="t" style="left:748.47px;top:205px;font-size:11.5px;line-height:20px;color:#0091ae;font-weight:500;-webkit-text-stroke:0.3px;">全てのチーム</span>
<span class="t" style="left:314.03px;top:243px;font-size:12.5px;line-height:20px;color:#33475b;letter-spacing:0.489px;">7月 2023</span>
<span class="t" style="left:339.67px;top:289px;font-size:11.5px;line-height:20px;color:#33475b;font-weight:500;letter-spacing:0.356px;-webkit-text-stroke:0.3px;">ウェブチャット</span>
<span class="t" style="left:722.27px;top:290px;font-size:10px;line-height:20px;color:#516f90;letter-spacing:-0.085px;">2023年7月4日の09:24 GMT+9</span>
<span class="t" style="left:339.67px;top:338px;font-size:11.5px;line-height:20px;color:#33475b;font-weight:500;letter-spacing:0.356px;-webkit-text-stroke:0.3px;">ウェブチャット</span>
<span class="t" style="left:722.27px;top:339px;font-size:10px;line-height:20px;color:#516f90;letter-spacing:-0.085px;">2023年7月4日の09:23 GMT+9</span>
<span class="t" style="left:314.03px;top:387px;font-size:12.5px;line-height:20px;color:#33475b;letter-spacing:0.572px;">6月 2023</span>
<span class="t" style="left:340.00px;top:434px;font-size:11.5px;line-height:20px;color:#33475b;font-weight:500;letter-spacing:0.057px;-webkit-text-stroke:0.3px;">マーケティング<b>E</b>メール</span>
<span class="t" style="left:461.67px;top:434px;font-size:11.5px;line-height:20px;color:#465b72;letter-spacing:0.186px;">をWaka &lt;waka@littlehelp.co.jp&gt;さんに送信しました</span>
<span class="t" style="left:744.07px;top:435px;font-size:10px;line-height:20px;color:#516f90;letter-spacing:-0.194px;">2023年6月29日の10:21 GMT+9</span>
<span class="t" style="left:340.33px;top:457px;font-size:11.5px;line-height:20px;color:#0091ae;font-weight:700;letter-spacing:0.286px;">Hi, how was your support experience?</span>
<span class="t" style="left:368.63px;top:493px;font-size:10px;line-height:20px;color:#516f90;letter-spacing:-0.089px;">配信済み</span>
<span class="t" style="left:340.03px;top:542px;font-size:11.5px;line-height:20px;color:#33475b;font-weight:500;letter-spacing:0.239px;-webkit-text-stroke:0.3px;">チケットアクティビティー</span>
<span class="t" style="left:718.87px;top:543px;font-size:10px;line-height:20px;color:#516f90;letter-spacing:-0.198px;">2023年6月29日の10:10 GMT+9</span>
<span class="t" style="left:340.70px;top:565px;font-size:11.5px;line-height:20px;color:#0091ae;font-weight:700;letter-spacing:0.493px;">Waka Fujii</span>
<span class="t" style="left:400.63px;top:566px;font-size:11.5px;line-height:20px;color:#465b72;letter-spacing:0.225px;">さんによって移動（チケット</span>
<span class="t" style="left:550.03px;top:566px;font-size:11.5px;line-height:20px;color:#0091ae;font-weight:500;letter-spacing:0.042px;-webkit-text-stroke:0.3px;">ボットチャットからの問題</span>
<span class="t" style="left:705.73px;top:566px;font-size:11.5px;line-height:20px;color:#465b72;letter-spacing:0.843px;">が、クローズ済みへ）。</span>
<span class="t" style="left:831.57px;top:566px;font-size:11.5px;line-height:20px;color:#0091ae;font-weight:500;-webkit-text-stroke:0.3px;">詳</span>
<span class="t" style="left:340.70px;top:587px;font-size:11.5px;line-height:20px;color:#0091ae;font-weight:500;letter-spacing:-0.122px;-webkit-text-stroke:0.3px;">細を表示</span>
<span class="t" style="left:340.03px;top:640px;font-size:11.5px;line-height:20px;color:#33475b;font-weight:500;letter-spacing:0.239px;-webkit-text-stroke:0.3px;">チケットアクティビティー</span>
<span class="t" style="left:717.67px;top:642px;font-size:10px;line-height:20px;color:#516f90;letter-spacing:-0.141px;">2023年6月29日の10:08 GMT+9</span>
</main>
<aside id="associations-sidebar">
<span class="t" style="left:930.33px;top:56px;font-size:11.5px;line-height:20px;color:#33475b;font-weight:700;letter-spacing:1.100px;">LINE</span>
<span class="t" style="left:959.33px;top:56px;font-size:11.5px;line-height:20px;color:#33475b;font-weight:500;letter-spacing:1.400px;-webkit-text-stroke:0.3px;">（<b>0</b>）</span>
<span class="t" style="left:1011.73px;top:122px;font-size:10px;line-height:20px;color:#5a7796;letter-spacing:0.346px;">LINE Chat</span>
<span class="t" style="left:938.13px;top:180px;font-size:9.7px;line-height:20px;color:#4d6178;letter-spacing:0.307px;">Powered by</span>
<span class="t" style="left:995.03px;top:180px;font-size:9.9px;line-height:20px;color:#33475b;font-weight:700;letter-spacing:0.198px;">LITTLE HELP CONNECT</span>
<span class="t" style="left:930.67px;top:233px;font-size:11.5px;line-height:20px;color:#33475b;font-weight:700;letter-spacing:-0.617px;">SMS</span>
<span class="t" style="left:954.13px;top:233px;font-size:11.5px;line-height:20px;color:#33475b;font-weight:500;letter-spacing:1.350px;-webkit-text-stroke:0.3px;">（<b>0</b>）</span>
<span class="t" style="left:1013.87px;top:298px;font-size:10px;line-height:20px;color:#5a7796;letter-spacing:-0.048px;">SMS Chat</span>
<span class="t" style="left:938.13px;top:357px;font-size:9.7px;line-height:20px;color:#4d6178;letter-spacing:0.307px;">Powered by</span>
<span class="t" style="left:995.03px;top:357px;font-size:9.9px;line-height:20px;color:#33475b;font-weight:700;letter-spacing:0.198px;">LITTLE HELP CONNECT</span>
<span class="t" style="left:930.67px;top:411px;font-size:11.5px;line-height:20px;color:#33475b;font-weight:500;letter-spacing:-1.367px;-webkit-text-stroke:0.3px;">会社</span>
<span class="t" style="left:950.83px;top:411px;font-size:11.5px;line-height:20px;color:#33475b;font-weight:500;letter-spacing:1.111px;-webkit-text-stroke:0.3px;">（<b>2</b>件）</span>
<span class="t" style="left:1132.87px;top:411px;font-size:11.5px;line-height:20px;color:#0091ae;font-weight:500;letter-spacing:0.167px;-webkit-text-stroke:0.3px;"><b>+</b>追加</span>
<span class="t" style="left:915.60px;top:446px;font-size:10px;line-height:20px;color:#2d3e50;font-weight:500;letter-spacing:0.380px;">プライマリー</span>
<span class="t" style="left:920.53px;top:471px;font-size:11.5px;line-height:20px;color:#0091ae;font-weight:700;letter-spacing:0.329px;">Little Help Agency</span>
<span class="t" style="left:920.53px;top:490px;font-size:11.5px;line-height:20px;color:#0091ae;font-weight:700;letter-spacing:0.224px;">littlehelp.co.jp</span>
<span class="t" style="left:920.00px;top:512px;font-size:11.5px;line-height:20px;color:#465b72;letter-spacing:0.683px;">電話：--</span>
<span class="t" style="left:920.63px;top:556px;font-size:11.5px;line-height:20px;color:#0091ae;font-weight:700;letter-spacing:0.444px;">Line</span>
<span class="t" style="left:920.63px;top:576px;font-size:11.5px;line-height:20px;color:#0091ae;font-weight:700;letter-spacing:0.372px;">line.me</span>
<span class="t" style="left:920.00px;top:597px;font-size:11.5px;line-height:20px;color:#465b72;letter-spacing:0.683px;">電話：--</span>
<span class="t" style="left:910.13px;top:632px;font-size:11.5px;line-height:20px;color:#0091ae;font-weight:500;letter-spacing:0.018px;-webkit-text-stroke:0.3px;">関連付けられた会社を表示</span>
</aside>
</div>
</body>
</html>
